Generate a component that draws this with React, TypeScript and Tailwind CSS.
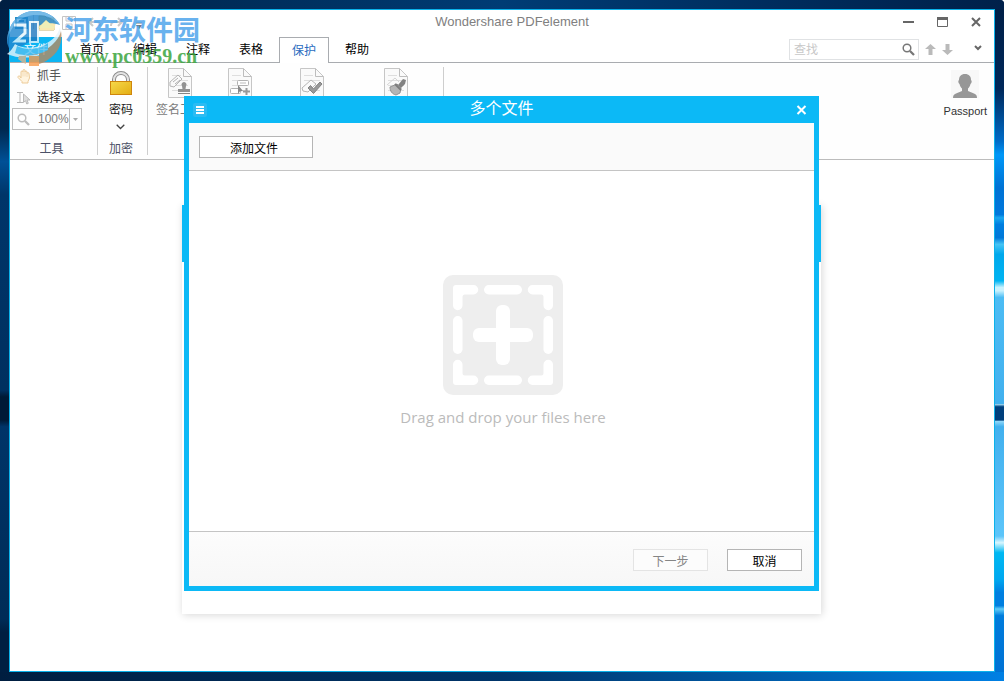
import { useState } from 'react'
import type { ReactNode } from 'react'

const tabs = ['首页', '编辑', '注释', '表格', '保护', '帮助']

const signTools = [
  { id: 'sign', label: '签名工具', cell: 'w-[60px]', icon: <StampMark /> },
  { id: 'place', label: '', cell: 'w-[60px]', icon: <PlaceMark /> },
  { id: 'verify', label: '', cell: 'w-[84px]', icon: <CheckMark /> },
  { id: 'clear', label: '', cell: 'w-[84px]', icon: <BrushMark /> },
]

/* ── Icons ── */

function PageIcon({ children }: { children: ReactNode }) {
  return (
    <svg width="24" height="30" viewBox="0 0 24 30" fill="none" aria-hidden="true">
      <path d="M.5.5h15l8 8v21H.5z" fill="#fafafa" stroke="#c6c6c6" />
      <path d="M15.500.5v8h8" stroke="#bdbdbd" />
      <path d="M4 7.500h9M4 12.500h16M4 17.500h16M4 22.500h16" stroke="#dedede" />
      {children}
    </svg>
  )
}

function StampMark() {
  return (
    <g>
      <path d="m2 14 8-7 4 4-8 8-4-1z" fill="#fafafa" stroke="#b5b5b5" />
      <path d="m5 14 5-4m-3 6 5-4" stroke="#b0b0b0" />
      <path d="M14 18a2.500 2.500 0 1 1 4 0l-.5 3h4.500v3H10v-3h4.500z" fill="#929292" />
      <path d="M10 25.500h12" stroke="#858585" />
    </g>
  )
}

function PlaceMark() {
  return (
    <g>
      <rect x="9.500" y="12.500" width="11" height="5" rx="1" fill="#fff" stroke="#b2b2b2" />
      <path d="M12 15h6" stroke="#bbb" />
      <rect x="2.500" y="20.500" width="10" height="5" rx="1" fill="#fff" stroke="#b2b2b2" />
      <path d="m10 17 5 6-3 .3L10 26z" fill="#888" />
      <path d="M18.500 20v7M15 23.500h7" stroke="#999" strokeWidth="2" />
    </g>
  )
}

function CheckMark() {
  return (
    <g>
      <path d="m2 20 9-8 5 4-8 8-5-1z" fill="#fafafa" stroke="#b5b5b5" />
      <path d="m8 20 2.500-2.500 3 3.500L20 14l2 2-8.500 9.500z" fill="#999" stroke="#828282" />
    </g>
  )
}

function BrushMark() {
  return (
    <g>
      <path d="m3 17 8-7 4 4" stroke="#d4d4d4" />
      <path d="m19 11 3 1-1 4-4 4-3-3z" fill="#828282" />
      <path d="m6 19 7-3 4 4-1 5-4 2c-4-1-6-4-6-8z" fill="#b5b5b5" stroke="#929292" />
      <path d="m11 16 6 6" stroke="#7c7c7c" strokeWidth="2" />
    </g>
  )
}

function LockIcon() {
  return (
    <svg width="22" height="24" viewBox="0 0 22 24" aria-hidden="true">
      <defs>
        <linearGradient id="lockBody" x1="0" y1="0" x2="1" y2="1">
          <stop offset="0" stopColor="#f6d94b" />
          <stop offset="1" stopColor="#e3ad13" />
        </linearGradient>
      </defs>
      <path d="M4 12V8.500a7 6.500 0 0 1 14 0V12" fill="none" stroke="#8d8d8d" strokeWidth="4" />
      <path d="M4 12V8.500a7 6.500 0 0 1 14 0V12" fill="none" stroke="#e3e3e3" strokeWidth="2" />
      <rect x=".5" y="10.500" width="21" height="13" fill="url(#lockBody)" stroke="#cf860c" />
    </svg>
  )
}

function HandIcon() {
  return (
    <svg width="14" height="15" viewBox="0 0 14 15" aria-hidden="true">
      <path
        d="M4 9V3a1 1 0 0 1 2 0V1.500a1 1 0 0 1 2 0V3a1 1 0 0 1 2 0v1.500a1 1 0 0 1 2 .2L12.500 9 11 12.500V14H5v-1.500L1 8.500a1.200 1.200 0 0 1 1.700-1.500z"
        fill="#fff4df" stroke="#eccb98"
      />
      <path d="M6 3v4.500M8 3v4.500M10 4.500v3.500" stroke="#f3dcb8" />
    </svg>
  )
}

function TextSelectIcon() {
  return (
    <svg width="14" height="14" viewBox="0 0 14 14" aria-hidden="true">
      <path d="M0 1.500h6M3 1.500v10M0 11.500h6" stroke="#b5b5b5" fill="none" />
      <path d="M6.500 3v8.500l2-1.800 1.300 3.300 1.500-.7L10 9h3z" fill="#ddd" stroke="#b9b9b9" />
    </svg>
  )
}

function Magnifier({ handle = '#777' }: { handle?: string }) {
  return (
    <svg width="13" height="13" viewBox="0 0 13 13" fill="none" aria-hidden="true">
      <circle cx="5" cy="5" r="3.800" stroke={handle} strokeWidth="1.500" />
      <path d="m8 8 4 4" stroke={handle} strokeWidth="2.300" />
    </svg>
  )
}

function AddTile() {
  return (
    <svg width="120" height="120" viewBox="0 0 120 120" fill="#fff" aria-hidden="true">
      <rect width="120" height="120" rx="10" fill="#eeeeee" />
      {[0, 90, 180, 270].map(angle => (
        <g key={angle} transform={`rotate(${angle} 60 60)`}>
          <path d="M13 10H30.500a4.700 4.700 0 0 1 0 9.500H22a2.500 2.500 0 0 0-2.500 2.500v8.500a4.700 4.700 0 0 1-9.500 0V13a3 3 0 0 1 3-3z" />
          <rect x="41" y="10" width="38" height="9.500" rx="4.700" />
        </g>
      ))}
      <rect x="53" y="30" width="14" height="60" rx="6" />
      <rect x="30" y="53" width="60" height="14" rx="6" />
    </svg>
  )
}

function QuickTools() {
  return (
    <svg width="140" height="20" viewBox="0 0 140 20" fill="none" aria-hidden="true">
      <path d="M6 6h11v10H6zM9 9h5" stroke="#2a8dc4" strokeWidth="2" />
      <path d="M23.500 3v14" stroke="#ccc" />
      <path d="M29 4h6l2 2h7v12H29z" fill="#e9d494" stroke="#c9b16c" />
      <path d="m29 18 4-8h13l-2 8z" fill="#f9e8b0" />
      <path d="M52.500 4.500h13v13h-13zM56 5v4h6V5M56 17v-5h6v5" stroke="#c4c4c4" />
      <path d="M79 10h8q3 0 3 4M83 6l-4 4 4 4M112 10h-8q-3 0-3 4M108 6l4 4-4 4" stroke="#c9c9c9" strokeWidth="2" />
      <path d="M126 11h6M126.500 13.500h5l-2.500 3z" fill="#777" stroke="#777" />
    </svg>
  )
}

/* ── Site badge over the top left corner ── */

function SiteBadge() {
  return (
    <div className="pointer-events-none absolute left-[6px] top-[10px] flex gap-[3px]">
      <svg width="56" height="57" viewBox="0 0 56 57" className="opacity-80" aria-hidden="true">
        {/* upper shell */}
        <path d="M1 33C1 14 13 1 29 1c11 0 20 5 25 14-8-3-16-2-22 1l-2 12-14 8-12 5z" fill="#1f86cf" />
        <path d="M1 33C4 14 17 4 32 5c9 0 16 4 22 10C49 6 40 1 29 1 13 1 1 14 1 33z" fill="#54a9e2" />
        {/* inner strokes */}
        <path d="M8 15h11v8l-9 8h10" fill="none" stroke="#e6f4fb" strokeWidth="3" />
        <path d="M24 12h8v20h-8z" fill="#1d78bf" stroke="#e6f4fb" strokeWidth="2" />
        <path d="m32 18 8-8 9 8z" fill="#eef0b8" />
        {/* sweeping band */}
        <path d="M1 44c3-2 5-5 8-10 7 5 20 5 30 0 8-4 13-9 15-17 2 9-2 18-11 24-11 7-28 9-42 3z" fill="#e9f5fa" />
        <path d="M7 43c14 4 29 1 39-8 5-5 8-9 9-14 2 12-3 22-12 28-4 3-7 4-10 5V44c-6 2-16 2-26-1z" fill="#b58b62" />
        <path d="M11 36c10 5 23 3 31-3v7c-9 5-22 7-33 3z" fill="#52bff0" />
        <path d="M13 46h7v8c-3-1-5-3-8-5z" fill="#dcb48c" />
        <path d="M23 46h10v10H23z" fill="#f79a4b" />
      </svg>
      <div className="flex flex-col whitespace-nowrap pt-1 opacity-85">
        <span className="font-['Noto_Sans_CJK_SC',sans-serif] text-[27px] font-bold leading-[30px] text-[#50a5ec]">河东软件园</span>
        <span className="font-['Liberation_Serif',serif] text-[20px] font-bold leading-[24px] text-[#3ba53f]">www.pc0359.cn</span>
      </div>
    </div>
  )
}

/* ── Window chrome ── */

function TitleBar() {
  return (
    <div className="grid h-[27px] grid-cols-[1fr_auto_1fr] items-center pb-1">
      <QuickTools />
      <h1 className="pl-5 text-[13px] leading-4 text-[#808080]">Wondershare PDFelement</h1>
      <div className="flex items-center justify-end gap-5 pr-[11px] text-[#666]">
        <button type="button" aria-label="Minimize" className="flex size-[14px] items-center justify-center">
          <svg width="11" height="11"><path d="M0 6h11" stroke="currentColor" strokeWidth="2" /></svg>
        </button>
        <button type="button" aria-label="Maximize" className="flex size-[14px] items-center justify-center">
          <svg width="11" height="10" fill="none" stroke="currentColor"><path d="M.5.5h10v9H.5z" /><path d="M0 1.500h11" strokeWidth="3" /></svg>
        </button>
        <button type="button" aria-label="Close" className="flex size-[14px] items-center justify-center">
          <svg width="10" height="10"><path d="m1 1 8 8m0-8L1 9" stroke="currentColor" strokeWidth="2" /></svg>
        </button>
      </div>
    </div>
  )
}

function TabBar({ active, onSelect }: { active: string; onSelect: (tab: string) => void }) {
  return (
    <div className="flex h-[26px] items-end justify-between border-b border-[#a9acb0]">
      <nav className="flex items-end gap-[3px]">
        <button type="button" className="mr-[2px] h-[25px] w-[52px] bg-[#0cb5f3] text-xs text-white">文件</button>
        {tabs.map(tab => (
          <button
            key={tab}
            type="button"
            onClick={() => onSelect(tab)}
            className={tab === active
              ? '-mb-px h-[26px] w-[50px] border border-b-0 border-[#a9acb0] bg-white text-xs text-[#2a6cc0]'
              : '-mb-px h-[26px] w-[50px] text-xs text-black'}
          >
            {tab}
          </button>
        ))}
      </nav>
      <div className="mb-[2px] flex items-center pr-3">
        <label className="flex h-[21px] w-[130px] items-center border border-[#e0e2e4] pl-1 pr-[3px]">
          <input type="text" aria-label="查找" placeholder="查找" className="min-w-0 flex-1 text-xs outline-none placeholder:text-[#c8c8c8]" />
          <Magnifier />
        </label>
        <button type="button" aria-label="Previous" className="ml-[6px]">
          <svg width="11" height="11" fill="#bababa"><path d="M5.500 0 11 5H7.500v6h-4V5H0z" /></svg>
        </button>
        <button type="button" aria-label="Next" className="ml-[6px]">
          <svg width="11" height="11" fill="#bababa"><path d="M5.500 11 0 6h3.500V0h4v6H11z" /></svg>
        </button>
        <button type="button" aria-label="Collapse ribbon" className="ml-[21px] pb-[3px]">
          <svg width="8" height="6" fill="none"><path d="m1 1 3 3 3-3" stroke="#666" strokeWidth="2" /></svg>
        </button>
      </div>
    </div>
  )
}

function Ribbon() {
  return (
    <div className="flex h-[97px] items-stretch justify-between border-b border-[#bcbcbc] bg-[#fefefe] pt-1 text-xs">
      <div className="flex pb-1">
        <section className="flex w-[88px] flex-col border-r border-[#cecece]">
          <button type="button" className="flex h-[18px] items-center gap-[6px] pl-[7px] text-[#555]"><HandIcon /> 抓手</button>
          <button type="button" className="mt-1 flex h-[18px] items-center gap-[6px] whitespace-nowrap pl-[7px] text-[#222]"><TextSelectIcon /> 选择文本</button>
          <div className="ml-[2px] mt-px flex h-[22px] w-[70px] items-stretch border border-[#bdbdbd]">
            <span className="flex flex-1 items-center gap-2 pl-1 text-[#777]">
              <Magnifier handle="#bcbcbc" /> 100%
            </span>
            <button type="button" aria-label="Zoom level" className="flex w-[13px] items-center justify-center border-l border-[#bdbdbd]">
              <svg width="5" height="3" fill="#aaa"><path d="M0 0h5L2.500 3z" /></svg>
            </button>
          </div>
          <h2 className="mt-auto pr-1 text-center leading-3 text-[#4c5167]">工具</h2>
        </section>

        <section className="flex w-[50px] flex-col items-center border-r border-[#cecece] pr-[3px]">
          <button type="button" className="flex flex-col items-center pt-1 text-[#222]">
            <LockIcon />
            <span className="mt-[7px]">密码</span>
            <svg width="9" height="6" fill="none" className="mt-[6px]"><path d="m.7.7 3.800 3.800L8.300.7" stroke="#444" strokeWidth="1.300" /></svg>
          </button>
          <h2 className="mt-auto leading-3 text-[#4c5167]">加密</h2>
        </section>

        <section className="flex w-[296px] items-start border-r border-[#cecece] pl-[2px] pt-px">
          {signTools.map(tool => (
            <button key={tool.id} type="button" aria-label={tool.label || tool.id} className={`${tool.cell} flex flex-col items-center text-[#7b7b7b]`}>
              <PageIcon>{tool.icon}</PageIcon>
              {tool.label && <span className="mt-1">{tool.label}</span>}
            </button>
          ))}
        </section>
      </div>

      <button type="button" className="flex flex-col items-center self-start pr-[7px] pt-[3px] text-[11px] leading-4 text-[#333]">
        <span className="flex size-7 items-end justify-center bg-[#f8f8f8]">
          <svg width="24" height="25" viewBox="0 0 24 25" fill="#979797" aria-hidden="true">
            <path d="M12 1c4 0 6 2.500 6 6 1 .5 1 3-.5 4-.5 2.500-1.500 3.500-2.500 4.500v2.500l6 2.500c2 .8 3 2 3 4.500H0c0-2.500 1-3.700 3-4.500L9 18v-2.500c-1-1-2-2-2.500-4.500C5 10 5 7.500 6 7c0-3.500 2-6 6-6z" />
          </svg>
        </span>
        <span className="mt-[5px]">Passport</span>
      </button>
    </div>
  )
}

/* ── Batch dialog ── */

function FilesDialog({ onClose }: { onClose: () => void }) {
  return (
    <div role="dialog" aria-labelledby="dialog-title" className="flex w-[635px] flex-col border-[5px] border-t-0 border-[#0cb9f6] bg-white text-xs">
      <header className="grid h-[27px] grid-cols-[1fr_auto_1fr] items-center bg-[#0cb9f6] text-white">
        <button type="button" aria-label="Menu" className="ml-1 flex size-[14px] items-center justify-center rounded-xs bg-[#2bbcf3]">
          <svg width="8" height="8"><path d="M0 1h8M0 4h8M0 7h8" stroke="#fff" strokeWidth="2" /></svg>
        </button>
        <h2 id="dialog-title" className="pb-[2px] text-base leading-5">多个文件</h2>
        <button type="button" aria-label="Close" onClick={onClose} className="mr-[7px] justify-self-end">
          <svg width="11" height="10"><path d="m1.500 1 8 8m0-8-8 8" stroke="#fff" strokeWidth="2" /></svg>
        </button>
      </header>

      <div className="border-b border-[#c4c4c4] bg-[#fafafa] px-[10px] pb-3 pt-[13px]">
        <button type="button" className="block h-[22px] w-[114px] border border-[#b5b5b5] bg-white pr-1 pt-[3px] text-black">添加文件</button>
      </div>

      <div className="flex h-[360px] flex-col items-center justify-center pl-[3px] pt-[2px]">
        <AddTile />
        <p className="mt-[10px] font-['Open_Sans','Noto_Sans',sans-serif] text-[15px] leading-6 text-[#bbb]">Drag and drop your files here</p>
      </div>

      <footer className="flex justify-end gap-[19px] border-t border-[#c4c4c4] bg-linear-to-b from-[#fcfcfc] to-[#f7f7f7] px-3 pb-[15px] pt-[17px]">
        <button type="button" disabled className="h-[22px] w-[75px] border border-[#e4e4e4] bg-[#fcfcfc] pt-[3px] text-[#858585]">下一步</button>
        <button type="button" onClick={onClose} className="h-[22px] w-[75px] border border-[#b5b5b5] bg-white pt-[3px] text-black">取消</button>
      </footer>
    </div>
  )
}

export default function App() {
  const [activeTab, setActiveTab] = useState('保护')
  const [dialogOpen, setDialogOpen] = useState(true)

  return (
    <div className="bg-white">
      <div className="relative grid min-h-screen grid-cols-[9px_1fr_9px] grid-rows-[9px_1fr_9px] overflow-hidden rounded-t-[4px] bg-[#002147] font-['Liberation_Sans','Noto_Sans_CJK_SC',sans-serif]">
        {/* Desktop around the window */}
        <div className="col-span-3 bg-linear-to-r from-[#001f42] via-[#003c75] to-[#00204a]" />
        <div className="bg-[linear-gradient(#002147_0%,#00284f_18%,#005096_23%,#003569_28%,#003060_57.500%,#001a36_58.500%,#001a36_62%,#003468_63%,#002c57_92%,#001f42_94%)]" />

        <main className="relative flex flex-col border border-[#0bb2ea] bg-white">
          <TitleBar />
          <TabBar active={activeTab} onSelect={setActiveTab} />
          <Ribbon />
          <div className="flex-1 pb-14 pl-4 pr-[17px] pt-[45px]">
            <div className="mx-auto w-full max-w-[639px] bg-white pb-[352px] shadow-[1px_1px_8px_rgba(0,0,0,0.16)]">
              <div className="h-[57px] bg-[#0cb9f6]" />
            </div>
          </div>
          {dialogOpen && (
            <div className="absolute inset-x-0 top-[86px] flex justify-center pr-px">
              <FilesDialog onClose={() => setDialogOpen(false)} />
            </div>
          )}
        </main>

        <div className="bg-[linear-gradient(#001f47_0%,#00285a_12%,#006cc8_20%,#0098f8_22%,#0072d4_27%,#0078dc_31%,#19a8f0_31.500%,#007ee0_32.500%,#0078d8_34.500%,#46c4f5_35.500%,#00a8ec_37%,#00b4f2_41%,#c8f2fe_42%,#c8f2fe_42.500%,#4cbcf4_43.500%,#42b0ee_59.500%,#a5e0fa_59.600%,#003f7c_60%,#003f7c_62%,#8fd6f8_62.200%,#42b0ee_63%,#5cc5fa_79.500%,#d8f6fe_80.500%,#00b8f2_82%,#00a8f0_86%,#007fe0_88%,#007fe0_90%,#60ccf8_90.500%,#007cdc_91.500%,#0072d4_100%)]" />
        <div className="col-span-3 bg-linear-to-r from-[#001e40] via-[#00356a] to-[#0080e4]" />
        <SiteBadge />
      </div>
    </div>
  )
}
